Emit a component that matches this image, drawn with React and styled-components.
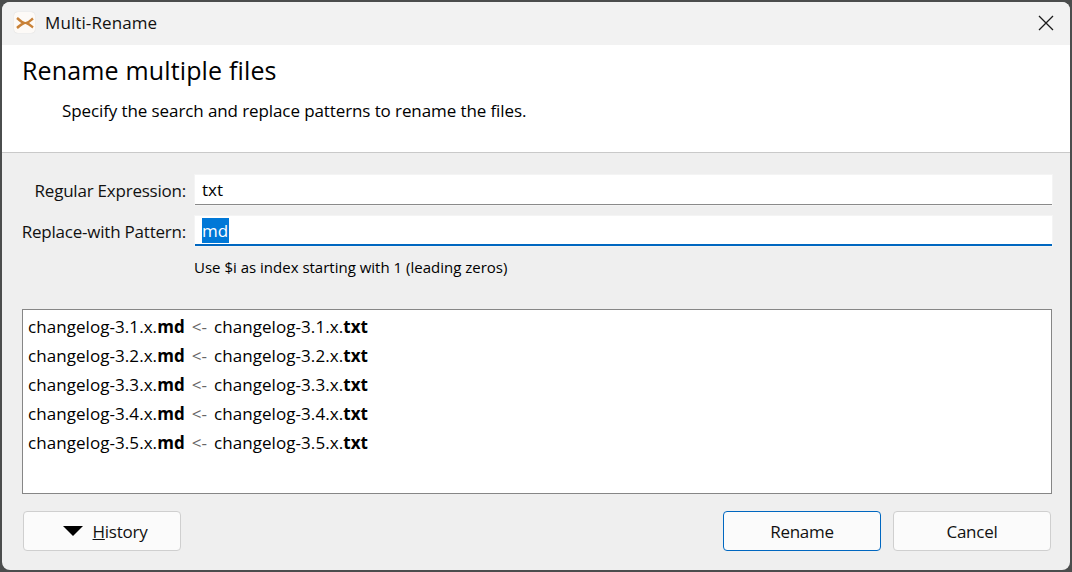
import styled, { createGlobalStyle } from "styled-components";

const GlobalStyle = createGlobalStyle`
  html, body {
    margin: 0;
    padding: 0;
    width: 1072px;
    height: 572px;
    overflow: hidden;
    background: #4b4d4d;
  }
`;

const files = ["3.1", "3.2", "3.3", "3.4", "3.5"];

const AppIcon = () => (
  <IconTile>
    <svg width="18" height="14" viewBox="0 0 18 14" fill="none">
      <path d="M1 2 C3.5 3.8 5.5 6 8 7 C5.5 8 3.5 10.2 1 12" stroke="#c98238" strokeWidth="2.6" />
      <path d="M17 2.5 C15 4 13 6.2 10.5 7 C13 7.8 15 10 17 11.5" stroke="#c98238" strokeWidth="2.4" />
    </svg>
  </IconTile>
);

export default function App() {
  return (
    <>
      <GlobalStyle />
      <Window>
        <TitleBar>
          <AppIcon />
          <Title>Multi-Rename</Title>
          <CloseIcon width="16" height="16" viewBox="0 0 16 16">
            <path d="M1 1 L15 15 M15 1 L1 15" stroke="#1a1a1a" strokeWidth="1.3" fill="none" />
          </CloseIcon>
        </TitleBar>
        <Header>
          <Heading>Rename multiple files</Heading>
          <Description>Specify the search and replace patterns to rename the files.</Description>
        </Header>
        <Body>
          <FormRow>
            <Label>Regular Expression:</Label>
            <Field>txt</Field>
          </FormRow>
          <FormRow>
            <Label>Replace-with Pattern:</Label>
            <Field $focused><Selected>md</Selected></Field>
          </FormRow>
          <Hint>Use $i as index starting with 1 (leading zeros)</Hint>
          <Preview>
            {files.map((version) => (
              <PreviewRow key={version}>
                changelog-{version}.x.<b>md</b>
                <Arrow>&lt;-</Arrow>
                changelog-{version}.x.<b>txt</b>
              </PreviewRow>
            ))}
          </Preview>
          <Footer>
            <Button $dropdown>
              <Caret />
              <span><u>H</u>istory</span>
            </Button>
            <FooterRight>
              <Button $primary>Rename</Button>
              <Button>Cancel</Button>
            </FooterRight>
          </Footer>
        </Body>
      </Window>
    </>
  );
}

const Window = styled.div`
  width: 1068px;
  height: 568px;
  margin: 2px;
  border-radius: 8px;
  overflow: hidden;
  background: #efefef;
  display: flex;
  flex-direction: column;
  color: #000;
  font-family: "Open Sans", "Noto Sans", sans-serif;
  font-size: 17px;
`;

const TitleBar = styled.div`
  height: 43px;
  flex: none;
  background: #f2f2f2;
  display: flex;
  align-items: center;
  padding: 0 16px 2px 12px;
  box-sizing: border-box;
`;

const IconTile = styled.div`
  width: 21px;
  height: 21px;
  border-radius: 4px;
  background: #fdfaf7;
  box-shadow: 0 0 1px #c9c9c9;
  display: flex;
  align-items: center;
  justify-content: center;
  margin-right: 10px;
`;

const Title = styled.div`
  flex: 1;
  font-size: 17px;
  letter-spacing: 0.1px;
  color: #111;
`;

const CloseIcon = styled.svg`
  display: block;
`;

const Header = styled.div`
  height: 108px;
  flex: none;
  box-sizing: border-box;
  background: #fff;
  border-bottom: 1px solid #c9c9c9;
  padding: 8px 20px 0;
`;

const Heading = styled.h1`
  margin: 0;
  font-size: 25px;
  line-height: 34px;
  font-weight: 400;
  letter-spacing: 0.15px;
`;

const Description = styled.p`
  margin: 13px 0 0 40px;
  font-size: 17px;
  line-height: 22px;
  letter-spacing: -0.1px;
`;

const Body = styled.div`
  flex: 1;
  display: flex;
  flex-direction: column;
  padding: 22px 18px 19px 20px;
`;

const FormRow = styled.div`
  display: flex;
  align-items: center;
  gap: 9px;
  height: 30px;
  margin-bottom: 11px;
`;

const Label = styled.div`
  width: 164px;
  flex: none;
  display: flex;
  justify-content: flex-end;
  white-space: nowrap;
  font-size: 17px;
  letter-spacing: -0.22px;
  color: #111;
  padding-top: 1px;
`;

const Field = styled.div`
  flex: 1;
  height: 30px;
  box-sizing: border-box;
  background: #fff;
  padding-left: 7px;
  line-height: 29px;
  font-size: 17px;
  border-bottom: ${(p) => (p.$focused ? "2px solid #0067c0" : "1px solid #8a8a8a")};
  box-shadow: 0 0 0 1px #f4f4f4;
`;

const Selected = styled.span`
  display: inline-block;
  height: 25px;
  line-height: 25px;
  margin-top: 2px;
  padding-right: 1px;
  vertical-align: top;
  background: #0078d7;
  color: #fff;
`;

const Hint = styled.div`
  margin: 0 0 0 172px;
  font-size: 15px;
  line-height: 20px;
`;

const Preview = styled.div`
  margin-top: 32px;
  height: 185px;
  box-sizing: border-box;
  background: #fff;
  border: 1px solid #868686;
  padding: 2px 5px;
  font-size: 17px;
  letter-spacing: 0.06px;
`;

const PreviewRow = styled.div`
  height: 29px;
  line-height: 29px;
  white-space: nowrap;
  b {
    font-weight: 700;
  }
`;

const Arrow = styled.span`
  color: #666;
  margin: 0 7px;
`;

const Footer = styled.div`
  display: flex;
  justify-content: space-between;
  margin-top: 17px;
  padding: 0 1px;
`;

const FooterRight = styled.div`
  display: flex;
  gap: 12px;
`;

const Button = styled.div`
  width: 158px;
  height: 40px;
  box-sizing: border-box;
  border-radius: 4px;
  background: #fbfbfb;
  border: 1px solid ${(p) => (p.$primary ? "#0067c0" : "#cfcfcf")};
  display: flex;
  align-items: center;
  justify-content: center;
  gap: 10px;
  padding-left: ${(p) => (p.$dropdown ? "6px" : "0")};
  font-size: 17px;
  letter-spacing: -0.25px;
  color: #111;
`;

const Caret = styled.div`
  width: 0;
  height: 0;
  border-left: 10px solid transparent;
  border-right: 10px solid transparent;
  border-top: 10px solid #000;
`;
